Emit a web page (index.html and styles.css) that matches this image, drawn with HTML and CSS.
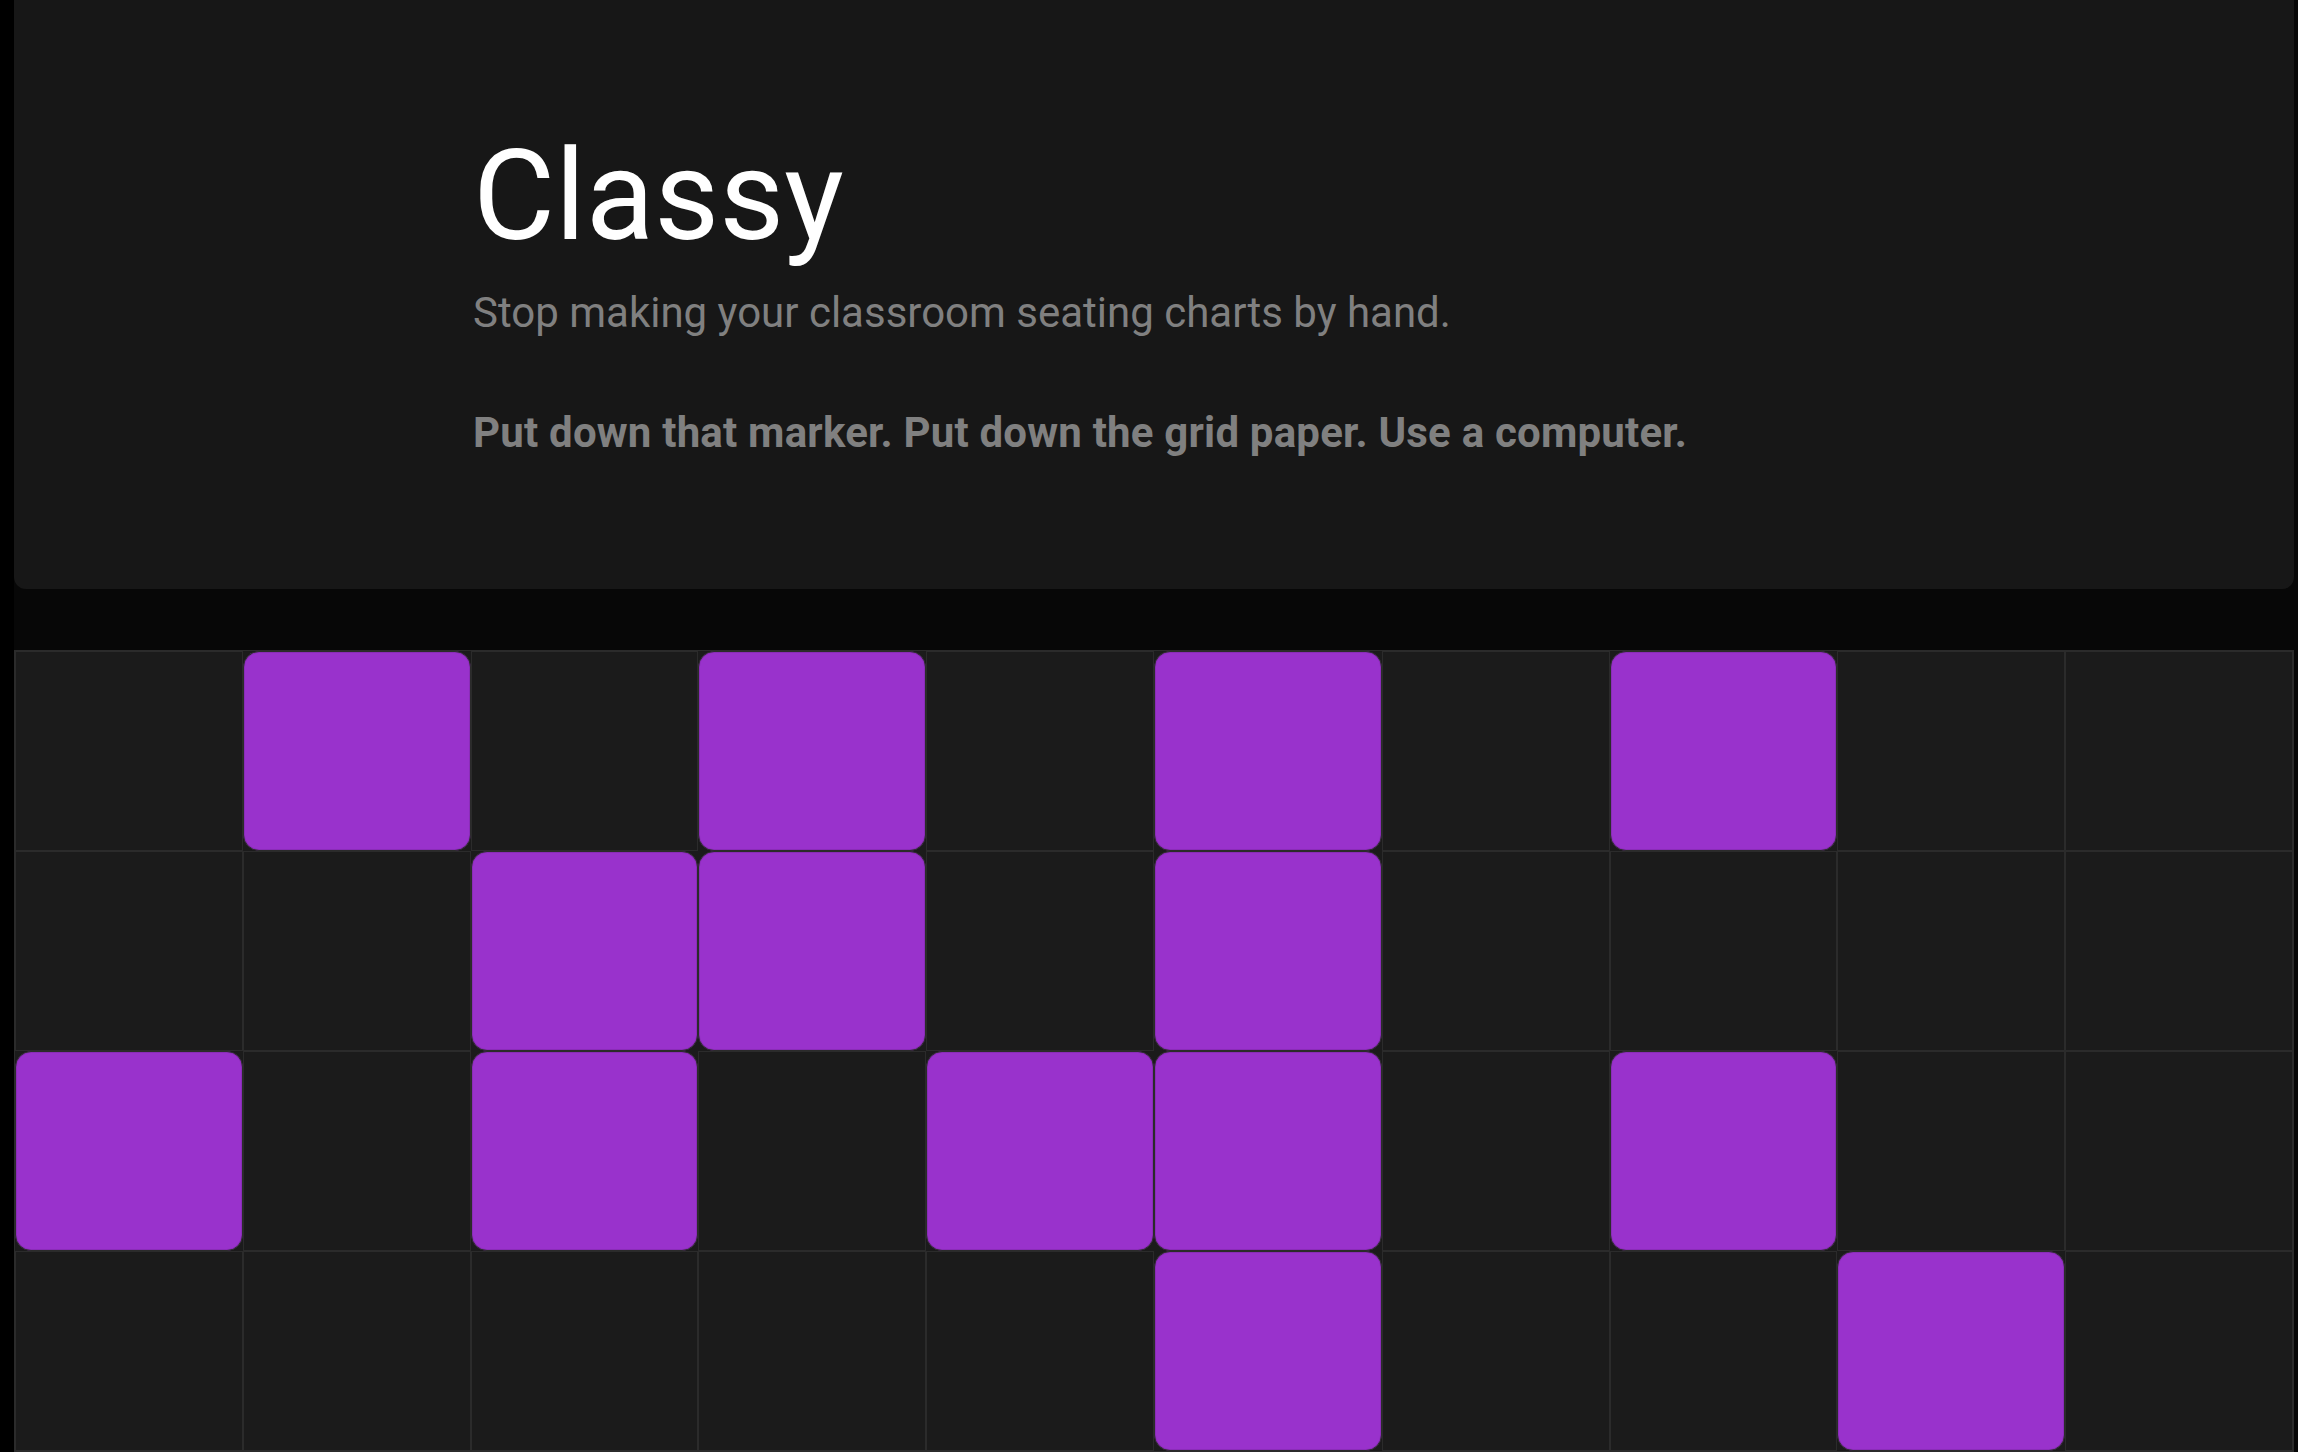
FILE: index.html
```html
<!DOCTYPE html>
<html lang="en">
<head>
<meta charset="utf-8">
<title>Classy</title>
<link rel="stylesheet" href="styles.css">
</head>
<body>
<div class="page">
  <header class="hero">
    <div class="hero-inner">
      <h1 class="title">Classy</h1>
      <p class="subtitle">Stop making your classroom seating charts by hand.</p>
      <p class="tagline">Put down that marker. Put down the grid paper. Use a computer.</p>
    </div>
  </header>
  <section class="room">
    <div class="cell"></div><div class="cell seat"></div><div class="cell"></div><div class="cell seat"></div><div class="cell"></div><div class="cell seat"></div><div class="cell"></div><div class="cell seat"></div><div class="cell"></div><div class="cell"></div>
    <div class="cell"></div><div class="cell"></div><div class="cell seat"></div><div class="cell seat"></div><div class="cell"></div><div class="cell seat"></div><div class="cell"></div><div class="cell"></div><div class="cell"></div><div class="cell"></div>
    <div class="cell seat"></div><div class="cell"></div><div class="cell seat"></div><div class="cell"></div><div class="cell seat"></div><div class="cell seat"></div><div class="cell"></div><div class="cell seat"></div><div class="cell"></div><div class="cell"></div>
    <div class="cell"></div><div class="cell"></div><div class="cell"></div><div class="cell"></div><div class="cell"></div><div class="cell seat"></div><div class="cell"></div><div class="cell"></div><div class="cell seat"></div><div class="cell"></div>
  </section>
</div>
</body>
</html>
```

FILE: styles.css
```css
html, body {
  margin: 0;
  padding: 0;
  background: #000;
  height: 100%;
  overflow: hidden;
}

body {
  font-family: Roboto, "Noto Sans", sans-serif;
}

.page {
  margin-left: 14px;
  background: #070707;
  min-height: 100%;
  display: flex;
  flex-direction: column;
}

.hero {
  margin-right: 4px;
  height: 589px;
  box-sizing: border-box;
  background: #171717;
  border-radius: 0 0 12px 12px;
  padding: 133px 0 0 459px;
}

.title {
  margin: 0;
  font-size: 126px;
  line-height: 1;
  font-weight: 400;
  color: #ffffff;
}

.subtitle {
  margin: 30px 0 0;
  font-size: 42px;
  line-height: 48px;
  font-weight: 400;
  color: #808080;
}

.tagline {
  margin: 72px 0 0;
  font-size: 42px;
  line-height: 48px;
  font-weight: 700;
  letter-spacing: 0.2px;
  color: #808080;
}

.room {
  margin-top: 61px;
  margin-right: 4px;
  display: grid;
  grid-template-columns: repeat(10, 1fr);
  grid-auto-rows: 200px;
  border: 1px solid #2b2b2b;
  background: #1b1b1b;
}

.cell {
  border: 1px solid #2b2b2b;
  background: #1b1b1b;
}

.seat {
  background: #9932cc;
  border-color: #2b2b2b;
  border-radius: 16px;
  box-shadow: inset 0 0 0 1px #8a2cb8;
}
```
